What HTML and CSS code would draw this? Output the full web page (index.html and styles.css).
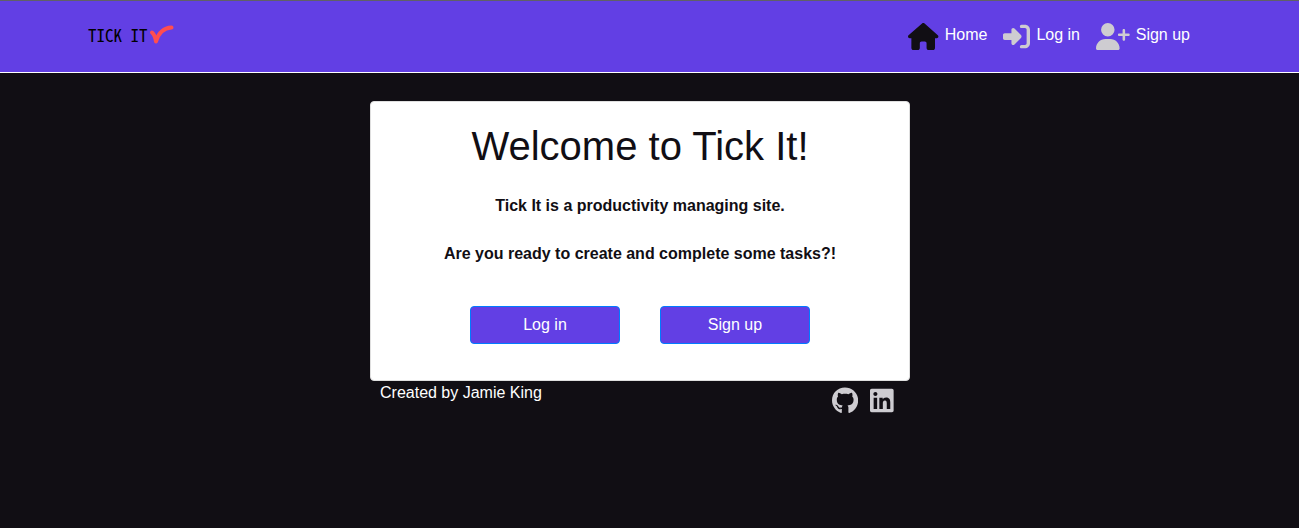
FILE: index.html
```html
<!DOCTYPE html>
<html lang="en">
<head>
<meta charset="utf-8">
<title>Tick It</title>
<link rel="stylesheet" href="styles.css">
</head>
<body>
<header class="site-header">
  <div class="header-inner">
    <a class="brand" href="#">TICK IT<svg class="brand-tick" viewBox="0 0 26 22" aria-hidden="true"><path d="M4 8.500 Q7 11 8 17.500 Q12 4 23.500 3.500"/></svg></a>
    <nav class="nav">
      <a class="nav-link active" href="#"><svg class="icon" viewBox="0 0 576 512" aria-hidden="true"><path d="M575.800 255.500c0 18-15 32.100-32 32.100l-32 0 .7 160.200c0 2.700-.2 5.400-.5 8.100l0 16.200c0 22.100-17.900 40-40 40l-16 0c-1.100 0-2.200 0-3.300-.1c-1.400 .1-2.800 .1-4.200 .1L416 512l-24 0c-22.100 0-40-17.900-40-40l0-24 0-64c0-17.700-14.300-32-32-32l-64 0c-17.700 0-32 14.300-32 32l0 64 0 24c0 22.100-17.900 40-40 40l-24 0-31.900 0c-1.500 0-3-.1-4.500-.2c-1.200 .1-2.400 .2-3.600 .2l-16 0c-22.100 0-40-17.900-40-40l0-112c0-.9 0-1.900 .1-2.800l0-69.700-32 0c-18 0-32-14-32-32.100c0-9 3-17 10-24L266.400 8c7-7 15-8 22-8s15 2 21 7L564.800 231.500c8 7 12 15 11 24z"/></svg>Home</a>
      <a class="nav-link" href="#"><svg class="icon" viewBox="0 0 512 512" aria-hidden="true"><path d="M217.900 105.900L340.700 228.700c7.200 7.200 11.300 17.100 11.300 27.300s-4.100 20.100-11.300 27.300L217.900 406.100c-6.400 6.400-15 9.900-24 9.900c-18.700 0-33.900-15.200-33.900-33.900l0-62.100L32 320c-17.700 0-32-14.300-32-32l0-64c0-17.700 14.300-32 32-32l128 0 0-62.100c0-18.700 15.200-33.900 33.900-33.900c9 0 17.600 3.600 24 9.900zM352 416l64 0c17.700 0 32-14.300 32-32l0-256c0-17.700-14.300-32-32-32l-64 0c-17.700 0-32-14.300-32-32s14.300-32 32-32l64 0c53 0 96 43 96 96l0 256c0 53-43 96-96 96l-64 0c-17.700 0-32-14.300-32-32s14.300-32 32-32z"/></svg>Log in</a>
      <a class="nav-link" href="#"><svg class="icon" viewBox="0 0 640 512" aria-hidden="true"><path d="M96 128a128 128 0 1 1 256 0A128 128 0 1 1 96 128zM0 482.300C0 383.800 79.800 304 178.300 304l91.400 0C368.200 304 448 383.800 448 482.300c0 16.400-13.300 29.700-29.700 29.700L29.700 512C13.300 512 0 498.700 0 482.300zM504 312l0-64-64 0c-13.300 0-24-10.700-24-24s10.700-24 24-24l64 0 0-64c0-13.300 10.700-24 24-24s24 10.700 24 24l0 64 64 0c13.300 0 24 10.700 24 24s-10.700 24-24 24l-64 0 0 64c0 13.300-10.700 24-24 24s-24-10.700-24-24z"/></svg>Sign up</a>
    </nav>
  </div>
</header>
<div class="content">
  <main class="card">
    <h1 class="title">Welcome to Tick It!</h1>
    <p class="lead">Tick It is a productivity managing site.</p>
    <p class="lead">Are you ready to create and complete some tasks?!</p>
    <div class="actions">
      <button class="btn" type="button">Log in</button>
      <button class="btn" type="button">Sign up</button>
    </div>
  </main>
  <footer class="footer">
    <span>Created by Jamie King</span>
    <div class="social">
      <a class="social-link" href="#" aria-label="GitHub"><svg class="icon" viewBox="0 0 496 512" aria-hidden="true"><path d="M165.900 397.400c0 2-2.300 3.600-5.200 3.600-3.300.3-5.600-1.300-5.600-3.600 0-2 2.300-3.600 5.200-3.600 3-.3 5.600 1.300 5.600 3.600zm-31.100-4.500c-.7 2 1.300 4.300 4.300 4.900 2.600 1 5.600 0 6.200-2s-1.300-4.300-4.300-5.200c-2.600-.7-5.500.3-6.200 2.300zm44.200-1.700c-2.900.7-4.900 2.600-4.600 4.900.3 2 2.900 3.300 5.900 2.600 2.900-.7 4.900-2.600 4.600-4.600-.3-1.900-3-3.200-5.900-2.900zM244.800 8C106.100 8 0 113.300 0 252c0 110.900 69.800 205.800 169.500 239.200 12.800 2.300 17.300-5.600 17.300-12.100 0-6.200-.3-40.400-.3-61.400 0 0-70 15-84.700-29.800 0 0-11.400-29.100-27.800-36.600 0 0-22.900-15.700 1.600-15.400 0 0 24.900 2 38.600 25.800 21.900 38.600 58.600 27.500 72.900 20.900 2.300-16 8.800-27.100 16-33.700-55.900-6.200-112.300-14.300-112.300-110.500 0-27.500 7.600-41.300 23.600-58.900-2.600-6.500-11.100-33.300 2.600-67.900 20.900-6.500 69 27 69 27 20-5.600 41.500-8.500 62.800-8.500s42.800 2.900 62.800 8.500c0 0 48.100-33.600 69-27 13.700 34.700 5.200 61.400 2.600 67.900 16 17.700 25.800 31.500 25.800 58.900 0 96.500-58.900 104.200-114.800 110.500 9.200 7.900 17 22.900 17 46.400 0 33.700-.3 75.400-.3 83.600 0 6.500 4.600 14.400 17.300 12.100C428.200 457.800 496 362.900 496 252 496 113.300 383.500 8 244.800 8z"/></svg></a>
      <a class="social-link" href="#" aria-label="LinkedIn"><svg class="icon" viewBox="0 0 448 512" aria-hidden="true"><path d="M416 32H31.900C14.300 32 0 46.500 0 64.300v383.400C0 465.500 14.300 480 31.900 480H416c17.600 0 32-14.500 32-32.300V64.300c0-17.800-14.400-32.300-32-32.300zM135.400 416H69V202.200h66.500V416zm-33.200-243c-21.300 0-38.500-17.300-38.500-38.500S80.900 96 102.200 96c21.200 0 38.500 17.300 38.500 38.500 0 21.300-17.200 38.500-38.500 38.500zm282.100 243h-66.400V312c0-24.800-.5-56.700-34.500-56.700-34.600 0-39.900 27-39.900 54.900V416h-66.400V202.200h63.700v29.200h.9c8.900-16.800 30.600-34.500 62.900-34.500 67.200 0 79.700 44.300 79.700 101.900V416z"/></svg></a>
    </div>
  </footer>
</div>
</body>
</html>
```
FILE: styles.css
```css
* { box-sizing: border-box; }

body {
  margin: 0;
  min-height: 100vh;
  background: #110e14;
  color: #fff;
  font: 16px/24px "Liberation Sans", Arial, sans-serif;
}

a { color: inherit; text-decoration: none; }

.icon {
  height: 27px;
  fill: #ceccd1;
}

.site-header {
  padding-right: 19px;
  background: #623fe4;
  border-top: 1px solid #606066;
  border-bottom: 1px solid #fff;
}

.header-inner {
  display: flex;
  align-items: center;
  justify-content: space-between;
  max-width: 1104px;
  min-height: 71px;
  margin: 0 auto;
  padding-right: 2px;
}

.brand {
  display: flex;
  align-items: center;
  padding-bottom: 3px;
  color: #000;
  font: 17px/24px "Noto Sans Mono CJK SC", "DejaVu Sans Mono", monospace;
}

.brand-tick {
  width: 26px;
  height: 22px;
  fill: none;
  stroke: #ff4d4f;
  stroke-width: 4;
  stroke-linecap: round;
  stroke-linejoin: round;
}

.nav { display: flex; gap: 16px; }

.nav-link {
  display: flex;
  align-items: flex-start;
  gap: 6px;
}

.active .icon { fill: #110e14; }

.content {
  padding: 28px 19px 0 0;
}

.card {
  max-width: 540px;
  margin: 0 auto;
  padding: 20px 20px 36px;
  background: #fff;
  border: 1px solid #dfdfdf;
  border-radius: 4px;
  color: #110e14;
  text-align: center;
}

.title {
  margin: 0 0 24px;
  font-size: 40px;
  line-height: 48px;
  font-weight: 400;
}

.lead {
  margin: 0 0 24px;
  font-weight: 700;
}

.actions {
  display: flex;
  justify-content: center;
  gap: 40px;
  margin-top: 40px;
}

.btn {
  width: 150px;
  height: 38px;
  padding: 0;
  background: #623fe4;
  border: 1px solid #007bff;
  border-radius: 4px;
  color: #fff;
  font: inherit;
}

.footer {
  display: flex;
  justify-content: space-between;
  max-width: 540px;
  margin: 0 auto;
  padding: 0 16px 0 10px;
}

.social {
  display: flex;
  gap: 12px;
  padding-top: 6px;
}

.social-link { display: flex; }
```
